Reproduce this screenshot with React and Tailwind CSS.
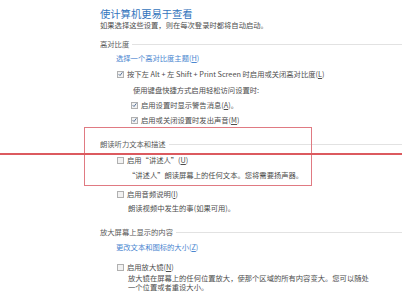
const font = { fontFamily: '"Noto Sans CJK SC", "Noto Sans", sans-serif' };

const Check = ({ checked }) => (
  <span className="flex h-[7px] w-[7px] shrink-0 items-center justify-center border border-[#b0b0b0] bg-[#f2f2f2]">
    {checked && (
      <svg width="6" height="6" viewBox="0 0 6 6">
        <path d="M0.8 3.2 L2.4 4.8 L5.3 1" fill="none" stroke="#4a6890" strokeWidth="1.1" />
      </svg>
    )}
  </span>
);

const Heading = ({ children, className }) => (
  <div className={"flex h-[10px] items-center leading-[10px] text-[#5a5a5a] " + className}>
    <span>{children}</span>
    <span className="ml-[3px] h-px flex-1 bg-[#e2e2e2]" />
  </div>
);

const CheckRow = ({ checked, children, className }) => (
  <div className={"flex h-[10px] items-center gap-[3px] leading-[10px] text-[#4d4d4d] " + className}>
    <Check checked={checked} />
    <span>{children}</span>
  </div>
);

export default function App() {
  return (
    <div className="relative h-[298px] w-[402px] overflow-hidden bg-white text-[7.3px]" style={font}>
      <div className="flex flex-col pl-[100px] pt-[8px]">
        <div className="h-[12px] text-[10.3px] leading-[12px] text-[#3375bd]">使计算机更易于查看</div>
        <div className="h-[10px] leading-[10px] text-[#4d4d4d]">如果选择这些设置，则在每次登录时都将自动启动。</div>

        <Heading className="mt-[9px]">高对比度</Heading>
        <div className="mt-[4px] h-[10px] pl-[16px] leading-[10px] text-[#4a86d0]">选择一个高对比度主题(<u>H</u>)</div>
        <CheckRow checked className="mt-[6px] pl-[17px]">
          按下左 Alt + 左 Shift + Print Screen 时启用或关闭高对比度(<u>L</u>)
        </CheckRow>
        <div className="mt-[6px] h-[10px] pl-[33px] leading-[10px] text-[#4d4d4d]">使用键盘快捷方式启用轻松访问设置时:</div>
        <CheckRow checked className="mt-[5px] pl-[31px]">
          启用设置时显示警告消息(<u>A</u>)。
        </CheckRow>
        <CheckRow checked className="mt-[5px] pl-[31px]">
          启用或关闭设置时发出声音(<u>M</u>)
        </CheckRow>

        <Heading className="mt-[14px]">朗读听力文本和描述</Heading>
        <CheckRow className="mt-[6px] pl-[17px]">
          启用“讲述人”(<u>U</u>)
        </CheckRow>
        <div className="mt-[5px] h-[10px] pl-[28px] leading-[10px] text-[#4d4d4d]">“讲述人”朗读屏幕上的任何文本。您将需要扬声器。</div>
        <CheckRow className="mt-[9px] pl-[17px]">
          启用音频说明(<u>I</u>)
        </CheckRow>
        <div className="mt-[4px] h-[10px] pl-[28px] leading-[10px] text-[#4d4d4d]">朗读视频中发生的事(如果可用)。</div>

        <Heading className="mt-[14px]">放大屏幕上显示的内容</Heading>
        <div className="mt-[5px] h-[10px] pl-[16px] leading-[10px] text-[#4a86d0]">更改文本和图标的大小(<u>Z</u>)</div>
        <CheckRow className="mt-[10px] pl-[17px]">
          启用放大镜(<u>N</u>)
        </CheckRow>
        <div className="mt-[2px] pl-[28px] leading-[9px] text-[#4d4d4d]">
          放大镜在屏幕上的任何位置放大，使那个区域的所有内容变大。您可以随处
          <br />
          一个位置或者重设大小。
        </div>
      </div>

      {/* annotation overlays */}
      <div className="absolute left-[84px] top-[127px] h-[59px] w-[228px] border border-[#e07a82]" />
      <div className="absolute left-0 top-[153px] h-[2px] w-full bg-[#dc5a5f]" />
    </div>
  );
}
